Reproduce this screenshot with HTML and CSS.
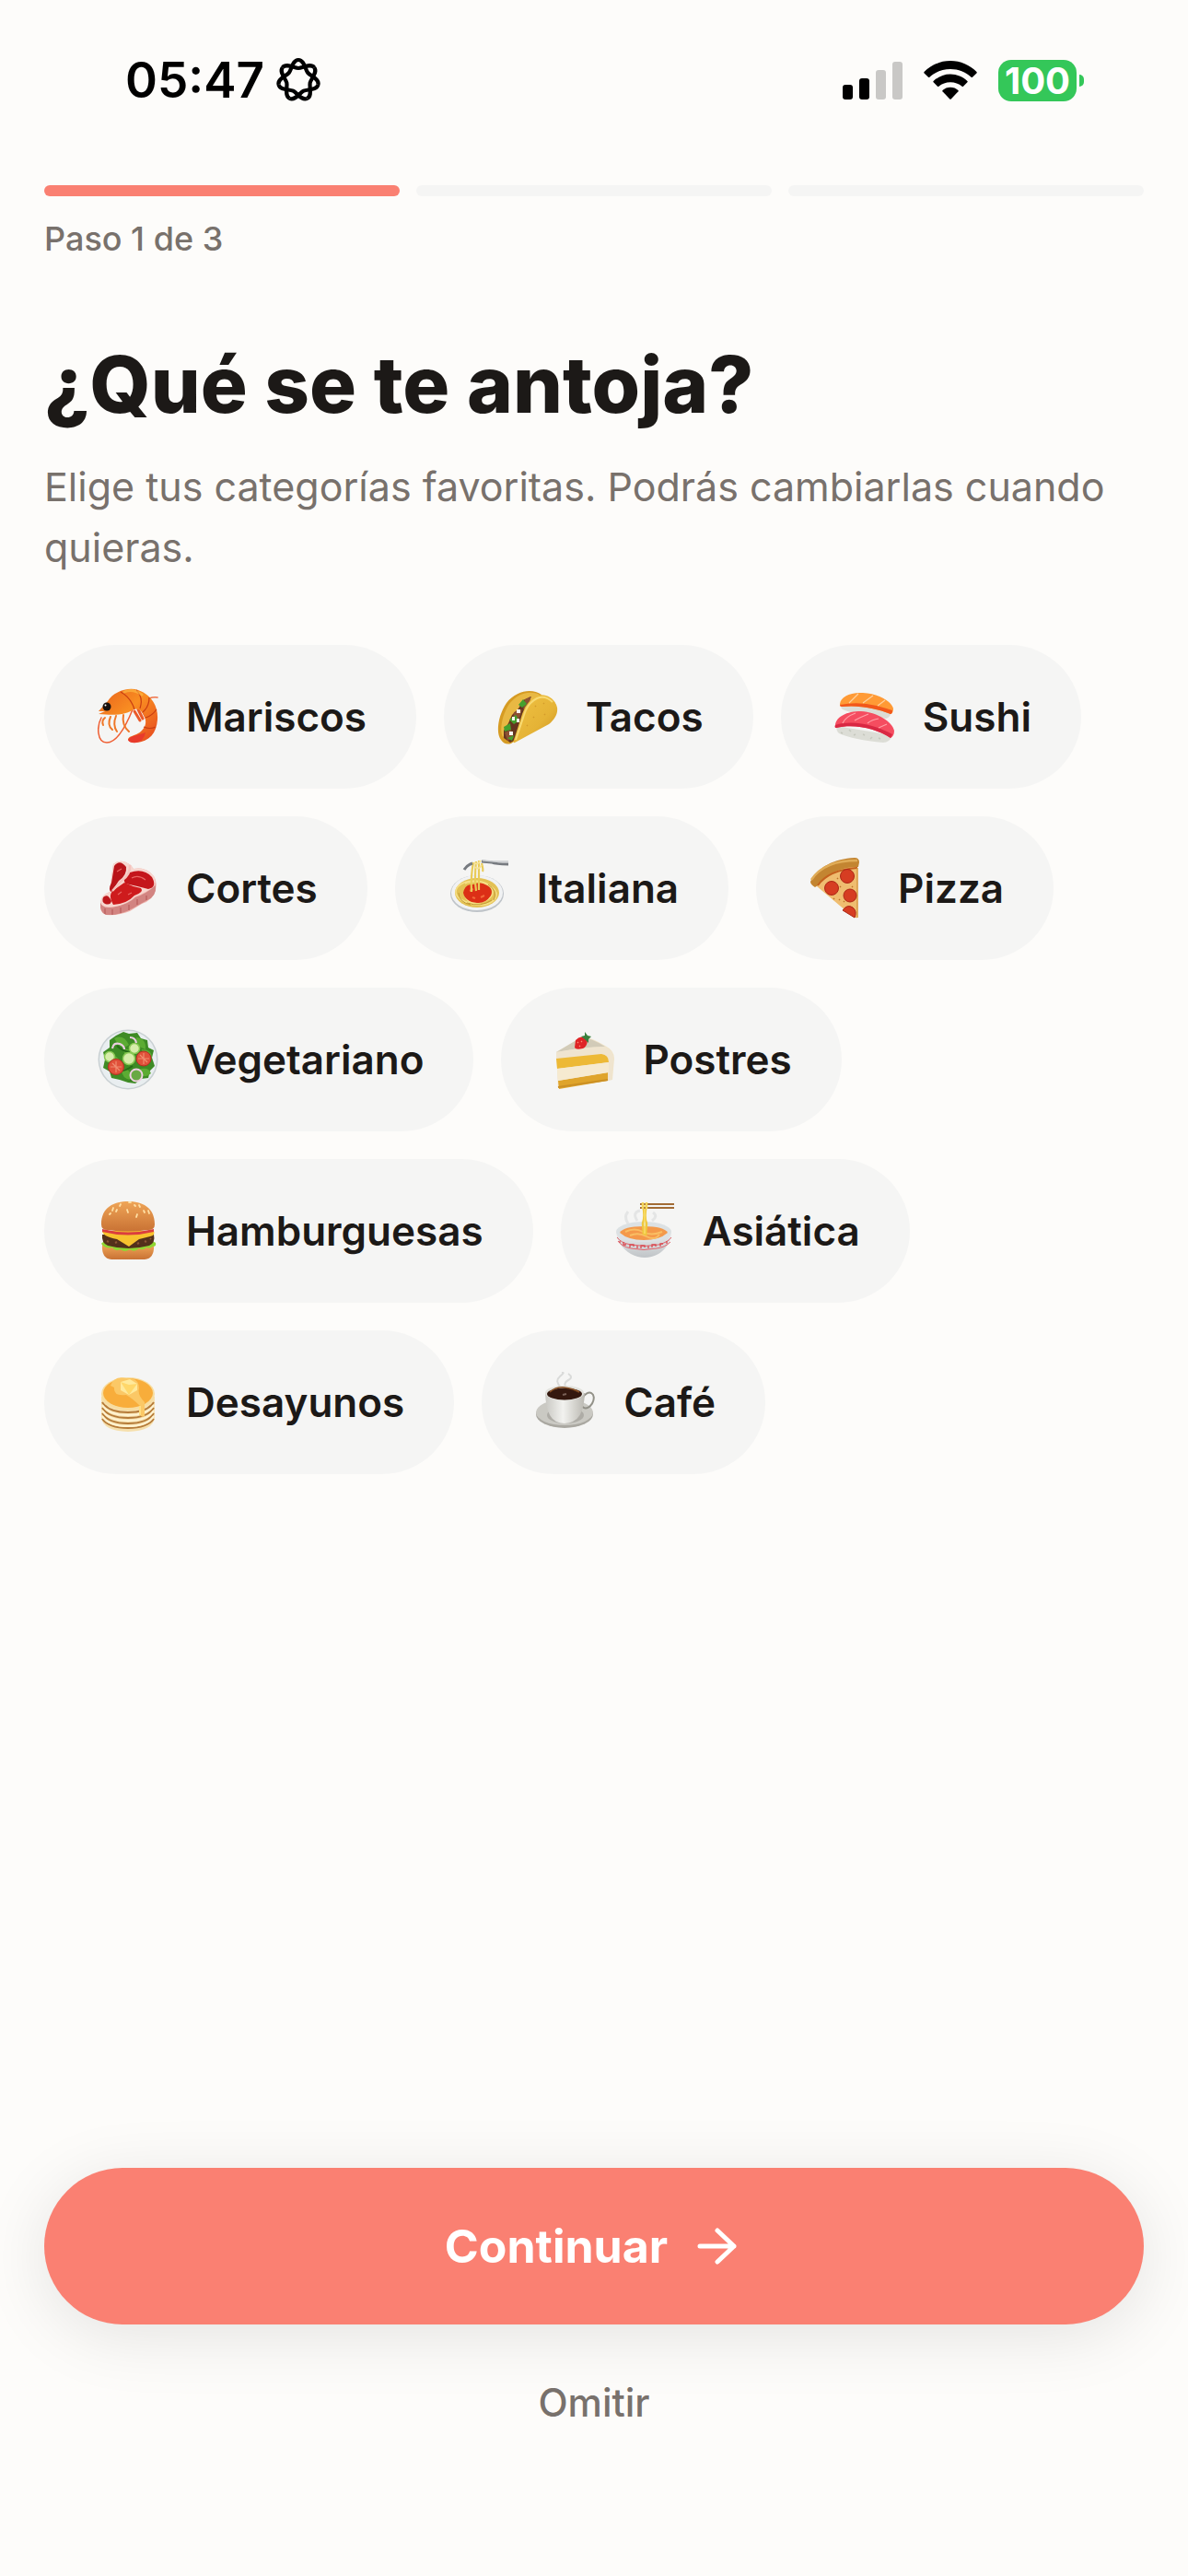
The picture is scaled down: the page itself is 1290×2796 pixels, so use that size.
FILE: index.html
```html
<!DOCTYPE html>
<html lang="es">
<head>
<meta charset="utf-8">
<meta name="viewport" content="width=device-width, initial-scale=1">
<title>¿Qué se te antoja?</title>
<link rel="stylesheet" href="styles.css">
</head>
<body>
<div class="screen">
  <header class="status">
    <div class="status-group">
      <span class="clock">05:47</span>
      <svg class="swirl" viewBox="-25 -25 50 50" aria-hidden="true">
        <defs><path id="loop" d="M0-22C6.500-22 7.400-11.600 10.160-8.100C13-4.600 22.900-1.400 21.450 4.900"/></defs>
        <g fill="none" stroke="#000" stroke-width="4.200">
          <use href="#loop"/>
          <use href="#loop" transform="rotate(51.430)"/>
          <use href="#loop" transform="rotate(102.860)"/>
          <use href="#loop" transform="rotate(154.290)"/>
          <use href="#loop" transform="rotate(205.710)"/>
          <use href="#loop" transform="rotate(257.140)"/>
          <use href="#loop" transform="rotate(308.570)"/>
        </g>
      </svg>
    </div>
    <div class="status-group status-right">
      <svg class="signal" viewBox="0 0 65 41" aria-hidden="true">
        <rect x="0" y="25" width="11" height="16" rx="3"/>
        <rect x="18" y="18" width="11" height="23" rx="3"/>
        <rect x="36" y="9" width="11" height="32" rx="3" fill="#c9c8c6"/>
        <rect x="54" y="0" width="11" height="41" rx="3" fill="#c9c8c6"/>
      </svg>
      <svg class="wifi" viewBox="0 0 58 42" aria-hidden="true">
        <path d="M29 0C40 0 50 4.500 57.500 12Q58 12.700 57.400 13.400L53 17.700Q52.300 18.300 51.600 17.700C45.500 12 37.700 9 29 9S12.500 12 6.400 17.700Q5.700 18.300 5 17.700L.6 13.400Q0 12.700.5 12C8 4.500 18 0 29 0Z"/>
        <path d="M29 14.500C36 14.500 42.500 17.300 47.400 22Q48 22.700 47.400 23.300L43 27.800Q42.300 28.400 41.600 27.800C38.200 24.900 33.800 23.300 29 23.300S19.800 24.900 16.400 27.800Q15.700 28.400 15 27.800L10.600 23.300Q10 22.700 10.600 22C15.500 17.300 22 14.500 29 14.500Z"/>
        <path d="M29 28.700C32.300 28.700 35.200 29.900 37.500 32Q38 32.700 37.500 33.300L29.700 41.400Q29 42 28.300 41.400L20.500 33.300Q20 32.700 20.500 32C22.800 29.900 25.700 28.700 29 28.700Z"/>
      </svg>
      <div class="battery"><span class="battery-level">100</span><span class="battery-tip"></span></div>
    </div>
  </header>

  <main class="content">
    <div class="steps" aria-hidden="true">
      <span class="step step-done"></span><span class="step"></span><span class="step"></span>
    </div>
    <p class="step-label">Paso 1 de 3</p>
    <h1 class="title">¿Qué se te antoja?</h1>
    <p class="subtitle">Elige tus categorías favoritas. Podrás cambiarlas cuando quieras.</p>

    <div class="chips">
      <button class="chip" type="button">
        <svg class="food" viewBox="0 0 66 66" aria-hidden="true">
          <defs><linearGradient id="shell" x1="0" y1="0" x2="1" y2="1"><stop offset="0" stop-color="#e8601c"/><stop offset=".45" stop-color="#f98e22"/><stop offset="1" stop-color="#e5451f"/></linearGradient></defs>
          <g fill="none" stroke-linecap="round">
            <path d="M56 13Q61 11 65 12" stroke="#f0744a" stroke-width="1.500"/>
            <path d="M38 25C32 40 22 61 10 61C-1 61-1 43 4 34" stroke="#ef5f34" stroke-width="1.500"/>
            <path d="M8 34Q4 37 6 42M14 33Q10 42 16 47M20 32Q16 42 21 49M28 31Q26 42 34 49" stroke="#ef7727" stroke-width="2"/>
            <path d="M40 27L46 37M44 25L49 35M47 23L53 34" stroke="#ea5a2a" stroke-width="3"/>
          </g>
          <path d="M1 27L11 16C17 6 33 0 44 4C58 9 66 21 65 36C64 51 56 60 42 61Q34 61 33 58C33 54 39 54 44 51C51 47 54 40 51 33C49 27 44 23 39 25C32 30 22 32 1 30L8 27Z" fill="url(#shell)"/>
          <path d="M25 6Q36 12 40 25M42 4Q50 12 46 24M56 12Q56 22 49 28M64 25Q59 32 52 34M63 44Q57 47 50 44" fill="none" stroke="#c93d12" stroke-width="1.200"/>
          <path d="M33 58C36 53 45 53 52 50Q50 60 42 61Q35 62 33 58Z" fill="#e83b2c"/>
          <path d="M29 6Q38 2 48 9" fill="none" stroke="#ffc147" stroke-width="3" stroke-linecap="round" opacity=".6"/>
          <circle cx="10" cy="22" r="4.500" fill="#17100d"/><circle cx="8.500" cy="20.500" r="1" fill="#fff"/>
        </svg>
        <span>Mariscos</span>
      </button>
      <button class="chip" type="button">
        <svg class="food" viewBox="0 0 66 66" aria-hidden="true">
          <defs><linearGradient id="tortilla" x1="0" y1="0" x2="1" y2="1"><stop offset="0" stop-color="#f0c243"/><stop offset=".6" stop-color="#e5b336"/><stop offset="1" stop-color="#c98f1c"/></linearGradient></defs>
          <path d="M48 9C38 2 21 4 10 18C1 31-2 51 4 58Q8 64 15 62L24 56Z" fill="#d69b23"/>
          <path d="M46 9C36 4 22 7 13 19C5 31 2 48 6 55Z" fill="#e8b843"/>
          <path d="M37 11L28 15L23 24L16 31L12 40L7 48L7 56L14 61L22 57L28 30Z" fill="#65351f"/>
          <path d="M30 14L36 11L35 20L28 25ZM18 28L27 25L24 34L17 36ZM8 50L15 47L18 56L11 59Z" fill="#8c5133"/>
          <path d="M23 20L28 14L32 19L27 23ZM30 22L36 17L33 26ZM13 36L20 31L24 37L18 41ZM7 44L14 40L15 47L8 49ZM11 56L18 53L16 59Z" fill="#45a02e"/>
          <path d="M21 25H25V29H21ZM16 33H19V37H16ZM21 35H24V39H21ZM13 49H17V53H13Z" fill="#f7f7ef"/>
          <path d="M42 11C51 6 63 13 65 23C66 30 62 36 56 41L19 61Q16 62 19 55L27 30Q31 17 42 11Z" fill="url(#tortilla)"/>
          <path d="M20 58L29 31Q33 18 43 13Q52 9 60 17" fill="none" stroke="#f8da73" stroke-width="2"/>
          <path d="M41 21l1 1M50 18l1 1M39 33l1 1M51 30l1 1M32 42l1 1" stroke="#d49b2b" stroke-width="1.500"/>
        </svg>
        <span>Tacos</span>
      </button>
      <button class="chip" type="button">
        <svg class="food" viewBox="0 0 66 66" aria-hidden="true">
          <path d="M7 20L62 25Q62 33 56 35Q20 30 9 25Q7 24 7 20Z" fill="#dcddd6"/>
          <path d="M6 20C6 12 16 6 31 7C48 8 62 16 64 24Q64 29 61 30C46 24 27 20 8 22Q6 22 6 20Z" fill="#ff9a35"/>
          <path d="M6 20Q26 16 46 21Q57 24 63 26Q63 30 61 30C46 24 27 20 8 22Q6 22 6 20Z" fill="#f2571b"/>
          <path d="M16 18L26 8M31 18L42 10M47 21L55 15" stroke="#ffd19d" stroke-width="1.200"/>
          <path d="M2 43L63 53Q60 61 53 61Q21 58 5 51Q2 48 2 43Z" fill="#dcddd6"/>
          <path d="M7 50l2 1M16 47l2 2M21 53l2-1M31 52l2 1M39 57l2-2M48 56l2 1" stroke="#c6c8be" stroke-width="1.500"/>
          <path d="M1 42C2 33 13 27 29 27C46 28 63 38 65 48Q65 54 61 56C46 46 22 40 2 45Q0 45 1 42Z" fill="#f54d60"/>
          <path d="M1 42C21 36 44 42 63 52L61 56C46 46 22 40 2 45Q0 45 1 42Z" fill="#d92843"/>
          <path d="M9 40Q12 33 23 29M22 37Q27 34 37 30M36 40Q41 36 48 35M48 45L57 41" fill="none" stroke="#ff9fa6" stroke-width="1.200"/>
        </svg>
        <span>Sushi</span>
      </button>
      <button class="chip" type="button">
        <svg class="food" viewBox="0 0 66 66" aria-hidden="true">
          <path d="M17 7Q25 0 36 8L39 12Q50 10 57 16Q66 23 63 35Q60 46 48 50L35 58Q23 63 9 62Q2 60 3 49Q4 41 13 37Z" fill="#eeb3ac"/>
          <path d="M3 49Q11 56 20 53Q34 50 41 43Q53 39 63 30Q64 42 54 46L38 55Q24 63 9 62Q2 59 3 49Z" fill="#d28481"/>
          <path d="M8 55V61M16 56V62M25 54V60M34 51V57M43 45V51M53 41V46" stroke="#b85c5b" stroke-width="1.200"/>
          <path d="M17 7Q25 0 36 8L39 12Q50 10 57 16Q66 23 61 31Q53 38 41 42Q32 51 18 53Q5 56 3 48Q4 40 13 37Z" fill="#f7d6cf"/>
          <path d="M18 9Q24 1 31 10Q32 19 23 25L15 37Q11 35 15 27Z" fill="#b9141a"/>
          <path d="M35 16Q50 11 59 21Q65 32 55 34Q44 31 30 28Q26 23 35 16Z" fill="#c4161b"/>
          <path d="M29 27Q37 31 47 33Q51 37 40 41Q32 50 17 51Q10 39 19 34Z" fill="#ce1b1d"/>
          <path d="M6 43Q11 38 15 47Q14 52 8 50Q4 48 6 43Z" fill="#bd171b"/>
          <path d="M35 8Q36 18 26 25L16 36" fill="none" stroke="#f5c3bd" stroke-width="2.500"/>
          <path d="M37 22Q44 18 52 24M22 40l4-3M33 40l4-2M21 15l5-3" fill="none" stroke="#e96662" stroke-width="1.200"/>
        </svg>
        <span>Cortes</span>
      </button>
      <button class="chip" type="button">
        <svg class="food" viewBox="0 0 66 66" aria-hidden="true">
          <ellipse cx="31" cy="39" rx="29" ry="20" fill="#bfc4c9"/>
          <ellipse cx="31" cy="38" rx="28" ry="19" fill="#f1f2f3"/>
          <ellipse cx="31" cy="38" rx="24" ry="16" fill="#e3c154"/>
          <g fill="none" stroke="#f6df86" stroke-width="1.500"><ellipse cx="28" cy="37" rx="20" ry="12"/><ellipse cx="35" cy="40" rx="17" ry="11"/><path d="M12 45Q25 54 43 50M18 28Q31 23 43 30"/></g>
          <g fill="none" stroke="#c29a34" stroke-width="1"><path d="M11 38Q11 48 24 51M43 29Q54 36 49 46M20 49Q35 54 47 46"/></g>
          <path d="M16 38Q18 28 27 29Q34 25 42 30Q49 34 46 41Q40 50 31 49Q18 48 16 38Z" fill="#dc2f16"/>
          <path d="M23 36l4-2M35 43l4-2M26 43l3 1" stroke="#f36a3a" stroke-width="2"/>
          <path d="M27 5Q24 20 25 37M30 4Q28 22 30 36M33 3Q33 20 33 35M36 6Q38 13 37 15" fill="none" stroke="#e9cb58" stroke-width="2.200"/>
          <path d="M28 5Q31 9 35 3M29 10Q32 14 36 8" fill="none" stroke="#f6e294" stroke-width="2"/>
          <path d="M17 13Q20 8 26 6M36 4L47 5Q51 7 65 7" fill="none" stroke="#777b80" stroke-width="3"/>
          <path d="M37 3L48 4L65 4" fill="none" stroke="#c6c9cc" stroke-width="1.500"/>
        </svg>
        <span>Italiana</span>
      </button>
      <button class="chip" type="button">
        <svg class="food" viewBox="0 0 66 66" aria-hidden="true">
          <path d="M7 29Q21 11 52 9L52 65Q50 66 46 63L8 31Z" fill="#efbd70"/>
          <path d="M1 26C9 10 27 1 49 0Q54 0 54 5L53 10C33 10 20 17 9 30L6 32Q1 29 1 26Z" fill="#c38531"/>
          <path d="M2 24C11 10 29 3 52 3" fill="none" stroke="#e0ac57" stroke-width="2.500"/>
          <path d="M9 30Q21 13 52 11" fill="none" stroke="#c4601d" stroke-width="2"/>
          <path d="M52 11V65" stroke="#d79a42" stroke-width="1.500"/>
          <g fill="#d63d22" stroke="#ad2716" stroke-width="1"><circle cx="41" cy="20" r="7.500"/><circle cx="24" cy="33" r="7.500"/><circle cx="44" cy="41" r="7"/><path d="M36 57Q41 50 47 54Q52 58 49 65Z"/></g>
          <path d="M30 22l1 1M33 31l1 1M32 45l1 1M46 31l1 1M37 47l1 1M26 44l1 1" stroke="#bd7228" stroke-width="1.500"/>
        </svg>
        <span>Pizza</span>
      </button>
      <button class="chip" type="button">
        <svg class="food" viewBox="0 0 66 66" aria-hidden="true">
          <circle cx="33" cy="33" r="32.500" fill="#c9d0d3"/><circle cx="33" cy="33" r="31" fill="#e9eef0"/>
          <path d="M20 7L28 3L34 5L43 4L47 10L54 12L55 20L61 23L59 31L62 40L57 45L55 53L47 54L41 59L33 58L24 55L15 53L13 46L6 42L8 33L6 25L13 20L13 12Z" fill="#3e8b25"/>
          <path d="M18 10Q28 5 34 17Q26 24 18 10ZM42 9Q53 10 52 22Q41 19 42 9ZM8 29Q20 25 25 36Q13 42 8 29ZM28 22Q39 20 38 31Q29 32 28 22ZM26 43Q37 42 36 55Q26 54 26 43ZM44 44Q55 40 58 48Q50 56 44 44ZM48 22Q59 22 59 31Q48 33 48 22Z" fill="#5cab33"/>
          <path d="M17 43Q25 49 38 40M21 18Q31 28 43 23M36 56L40 44" fill="none" stroke="#276c18" stroke-width="2"/>
          <path d="M16 21Q17 14 24 16Q29 18 29 22M35 9Q41 9 42 15" fill="none" stroke="#eccde0" stroke-width="2.200"/>
          <circle cx="42" cy="50" r="6.500" fill="#69a944" stroke="#efd0e2" stroke-width="2"/>
          <g fill="#d7edaa" stroke="#88c853" stroke-width="1.500"><circle cx="40" cy="21" r="5.500"/><circle cx="13" cy="30" r="5.500"/><circle cx="34" cy="32" r="6.500"/></g>
          <g fill="#e0513a" stroke="#b52f23" stroke-width="1"><circle cx="50" cy="32" r="8"/><circle cx="20" cy="41" r="8.500"/></g>
          <path d="M50 26V38M44 32H56M46 28L54 36M20 35V47M14 41H26M16 37L24 45" stroke="#f08d70" stroke-width="1.200"/>
        </svg>
        <span>Vegetariano</span>
      </button>
      <button class="chip" type="button">
        <svg class="food" viewBox="0 0 66 66" aria-hidden="true">
          <path d="M2 25L29 9Q37 7 55 18Q65 23 65 32L63 55L4 64Z" fill="#f0e4ca"/>
          <path d="M2 25L29 9Q39 9 55 19Q32 20 2 25Z" fill="#d2cbb8"/>
          <path d="M2 25Q32 19 54 19Q65 24 64 33L62 55L58 56L60 33Q58 27 51 27L2 32Z" fill="#efe4cf"/>
          <path d="M2 32L51 27Q59 28 59 36L3 43Z" fill="#edb936"/>
          <path d="M4 56L58 47V56L5 65Z" fill="#dfa42b"/>
          <path d="M4 63L58 55" stroke="#cb9024" stroke-width="2"/>
          <path d="M3 43L59 36V47L4 56Z" fill="#f6ead0"/>
          <path d="M23 12Q29 5 36 12Q35 20 31 21Q23 23 22 20Z" fill="#df2426"/>
          <path d="M25 14l1 1M29 13l1 1M27 18l1 1" stroke="#ff8c74" stroke-width="1.300"/>
          <path d="M29 8L33 7L33 3L36 7L40 8L37 11L37 15L33 11Z" fill="#39803d"/>
        </svg>
        <span>Postres</span>
      </button>
      <button class="chip" type="button">
        <svg class="food" viewBox="0 0 66 66" aria-hidden="true">
          <defs><linearGradient id="bun" x1="0" y1="0" x2="0" y2="1"><stop offset="0" stop-color="#efa557"/><stop offset="1" stop-color="#c97234"/></linearGradient></defs>
          <path d="M5 48H61Q62 63 51 64H15Q4 63 5 48Z" fill="url(#bun)"/>
          <path d="M4 47Q7 42 33 43Q60 43 63 46Q64 50 60 50Q56 53 53 51Q49 55 45 52Q40 57 35 53Q29 57 25 53Q19 56 16 51Q9 53 4 47Z" fill="#8fd632"/>
          <path d="M5 37H61Q63 46 56 49Q33 55 11 49Q4 46 5 37Z" fill="#53301b"/>
          <path d="M10 44l2 1M19 46l2-1M43 47l2-1M51 44l2 1M57 41l1 1" stroke="#8c5636" stroke-width="2"/>
          <path d="M5 33H61Q63 38 57 39L45 42L34 50L21 42Q5 39 5 33Z" fill="#f8c22e"/>
          <path d="M5 31Q33 38 61 31V34Q33 41 5 34Z" fill="#db3d3f"/>
          <path d="M4 26C4 7 18 1 33 1S62 7 62 26Q62 32 55 32Q33 35 11 32Q4 32 4 26Z" fill="url(#bun)"/>
          <path d="M17 8l-1 3M25 4l-1 2M34 2h2M45 5l1 2M21 10l-1 2M32 10l1 3M43 15l-1 3M50 11l1 2M55 11l1 3M14 14l-1 1M40 5l1 1" stroke="#ffe0a5" stroke-width="1.800" stroke-linecap="round"/>
        </svg>
        <span>Hamburguesas</span>
      </button>
      <button class="chip" type="button">
        <svg class="food" viewBox="0 0 66 66" aria-hidden="true">
          <defs><linearGradient id="bowl" x1="0" y1="0" x2="0" y2="1"><stop offset="0" stop-color="#f6f8f9"/><stop offset="1" stop-color="#c0c4c7"/></linearGradient></defs>
          <path d="M15 25Q10 18 15 12M25 22Q19 13 28 11M41 22Q48 17 42 13" fill="none" stroke="#e4e5e5" stroke-width="3"/>
          <path d="M2 33Q6 25 32 25T62 33Q62 49 48 58Q33 66 18 58Q3 49 2 33Z" fill="url(#bowl)"/>
          <ellipse cx="32" cy="34" rx="30" ry="11" fill="#dce1e3"/>
          <path d="M6 35Q10 28 32 28T58 35Q49 43 32 43T6 35Z" fill="#f4994a"/>
          <path d="M12 34Q22 29 31 34T52 34M17 38Q26 34 35 39T49 37" fill="none" stroke="#f9be63" stroke-width="2"/>
          <path d="M3 40Q7 46 18 48Q33 51 48 48Q59 45 62 40M4 44Q8 50 18 52Q32 55 46 52Q55 51 61 45" fill="none" stroke="#e0636a" stroke-width="1"/>
          <path d="M6 44V46M10 45V48H13M17 51V48H21V50M25 49V52M29 52V49H33V51M37 49V52M41 51V48H45V50M50 50V47H53M57 44V47" fill="none" stroke="#d94a51" stroke-width="1.300"/>
          <path d="M31 5Q34 17 31 25L32 37M35 5Q32 18 35 25L34 38" fill="none" stroke="#efc83e" stroke-width="2.500"/>
          <path d="M33 6V36" stroke="#ffe983" stroke-width="1"/>
          <path d="M28 4H65M28 8H65" stroke="#a26b34" stroke-width="2"/>
          <path d="M31 2V9M35 2V9" stroke="#f5d65b" stroke-width="2.500"/>
        </svg>
        <span>Asiática</span>
      </button>
      <button class="chip" type="button">
        <svg class="food" viewBox="0 0 66 66" aria-hidden="true">
          <path d="M4 27H62V50Q60 64 33 65Q6 64 4 50Z" fill="#f6e0ae"/>
          <g fill="none" stroke="#b67c3a" stroke-width="2"><path d="M5 33Q12 44 33 44T61 33"/><path d="M5 39Q12 50 33 50T61 39"/><path d="M5 45Q12 56 33 56T61 45"/><path d="M5 51Q12 61 33 61T61 51"/></g>
          <g fill="none" stroke="#fff3d2" stroke-width="2"><path d="M5 36Q12 47 33 47T61 36"/><path d="M5 42Q12 53 33 53T61 42"/><path d="M5 48Q12 59 33 59T61 48"/></g>
          <ellipse cx="33" cy="24" rx="29" ry="18" fill="#f7dda0"/>
          <ellipse cx="33" cy="23" rx="27" ry="16" fill="#f8ad3b"/>
          <path d="M14 15Q18 4 31 7Q45 6 45 18Q43 25 51 33V48Q47 50 46 46V37Q38 29 31 25Q17 27 18 17Z" fill="#fbc866"/>
          <path d="M25 11L35 8L43 13V20L34 25L25 20Z" fill="#ffe99b"/><path d="M25 11L34 14L43 13L34 25Z" fill="#ffd76a"/>
          <path d="M46 37V47" stroke="#ffdf83" stroke-width="2"/>
        </svg>
        <span>Desayunos</span>
      </button>
      <button class="chip" type="button">
        <svg class="food" viewBox="0 0 66 66" aria-hidden="true">
          <defs><linearGradient id="cup" x1="0" y1="0" x2="1" y2="0"><stop offset="0" stop-color="#c8c7c2"/><stop offset=".45" stop-color="#f2f2ef"/><stop offset="1" stop-color="#bab8b1"/></linearGradient></defs>
          <path d="M28 17Q21 10 27 5T29 1M34 18Q30 12 36 9T36 2" fill="none" stroke="#d9dad9" stroke-width="2"/>
          <ellipse cx="32" cy="46" rx="31" ry="15" fill="#aaa8a1"/>
          <ellipse cx="32" cy="44" rx="31" ry="14" fill="#cac9c3"/>
          <ellipse cx="33" cy="47" rx="20" ry="9" fill="#aeaca6"/>
          <ellipse cx="57" cy="31" rx="6" ry="9" fill="none" stroke="#929188" stroke-width="2" transform="rotate(28 57 31)"/>
          <path d="M11 23H54Q53 49 41 54Q32 58 23 54Q12 49 11 23Z" fill="url(#cup)"/>
          <ellipse cx="32" cy="23" rx="21" ry="8" fill="#e1e1dc"/>
          <ellipse cx="32" cy="24" rx="19" ry="6.500" fill="#34180f"/>
          <path d="M16 22Q23 16 32 17T48 22" fill="none" stroke="#885126" stroke-width="1.500"/>
          <path d="M30 25l4-1" stroke="#796057" stroke-width="2"/>
        </svg>
        <span>Café</span>
      </button>
    </div>
  </main>

  <footer class="actions">
    <button class="continue" type="button">
      <span>Continuar</span>
      <svg class="arrow" viewBox="0 0 50 40" aria-hidden="true"><path d="M3 20H40M22 3L40 20L22 37"/></svg>
    </button>
    <a class="skip" href="#">Omitir</a>
  </footer>
</div>
</body>
</html>
```
FILE: styles.css
```css
* {
  box-sizing: border-box;
}

body {
  margin: 0;
  background: #fdfcfa;
  color: #1c1917;
  font-family: Inter, "Liberation Sans", sans-serif;
}

button {
  border: 0;
  font: inherit;
  color: inherit;
  cursor: pointer;
}

.screen {
  min-height: 100vh;
  display: flex;
  flex-direction: column;
}

.status {
  display: flex;
  align-items: center;
  justify-content: space-between;
  padding: 55px 113px 0 136px;
}

.status-group {
  display: flex;
  align-items: center;
  gap: 12px;
}

.status-right {
  gap: 23px;
}

.clock {
  color: #000;
  font-size: 53px;
  font-weight: 600;
  line-height: 64px;
}

.swirl {
  width: 50px;
  height: 50px;
}

.signal {
  width: 65px;
  height: 41px;
}

.wifi {
  width: 58px;
  height: 42px;
}

.battery {
  display: flex;
  align-items: center;
  gap: 3px;
}

.battery-level {
  width: 85px;
  border-radius: 14px;
  background: #34c759;
  color: #fff;
  font-size: 40px;
  font-weight: 700;
  line-height: 45px;
  text-align: center;
}

.battery-tip {
  width: 5px;
  height: 13px;
  border-radius: 0 6px 6px 0;
  background: #34c759;
}

.content {
  padding: 82px 48px 0;
}

.steps {
  display: flex;
  gap: 18px;
}

.step {
  flex: 1;
  height: 12px;
  border-radius: 6px;
  background: #f5f5f4;
}

.step-done {
  background: #fa8072;
}

.step-label {
  margin: 24px 0 0;
  color: #78716c;
  font-size: 36px;
  font-weight: 500;
  line-height: 44px;
}

.title {
  margin: 84px 0 0;
  font-size: 85px;
  font-weight: 800;
  line-height: 106px;
}

.subtitle {
  margin: 24px 0 0;
  color: #78716c;
  font-size: 43px;
  line-height: 66px;
}

.chips {
  display: flex;
  flex-wrap: wrap;
  gap: 30px;
  margin-top: 73px;
}

.chip {
  display: flex;
  align-items: center;
  gap: 30px;
  height: 156px;
  padding: 0 54px 0 58px;
  border-radius: 78px;
  background: #f5f5f4;
  font-size: 44px;
  font-weight: 600;
}

.food {
  width: 66px;
  height: 66px;
}

.actions {
  display: flex;
  flex-direction: column;
  align-items: center;
  gap: 48px;
  margin-top: auto;
  padding: 48px 48px 151px;
}

.continue {
  display: flex;
  align-items: center;
  justify-content: center;
  gap: 32px;
  width: 100%;
  height: 170px;
  border-radius: 85px;
  background: #fa8072;
  box-shadow: 0 12px 72px rgb(0 0 0 / 10%);
  color: #fff;
  font-size: 50px;
  font-weight: 700;
}

.arrow {
  width: 50px;
  height: 40px;
  fill: none;
  stroke: #fff;
  stroke-width: 5;
  stroke-linecap: round;
  stroke-linejoin: round;
}

.skip {
  padding: 11px 24px;
  color: #78716c;
  font-size: 42px;
  font-weight: 500;
  line-height: 52px;
  text-decoration: none;
}
```
